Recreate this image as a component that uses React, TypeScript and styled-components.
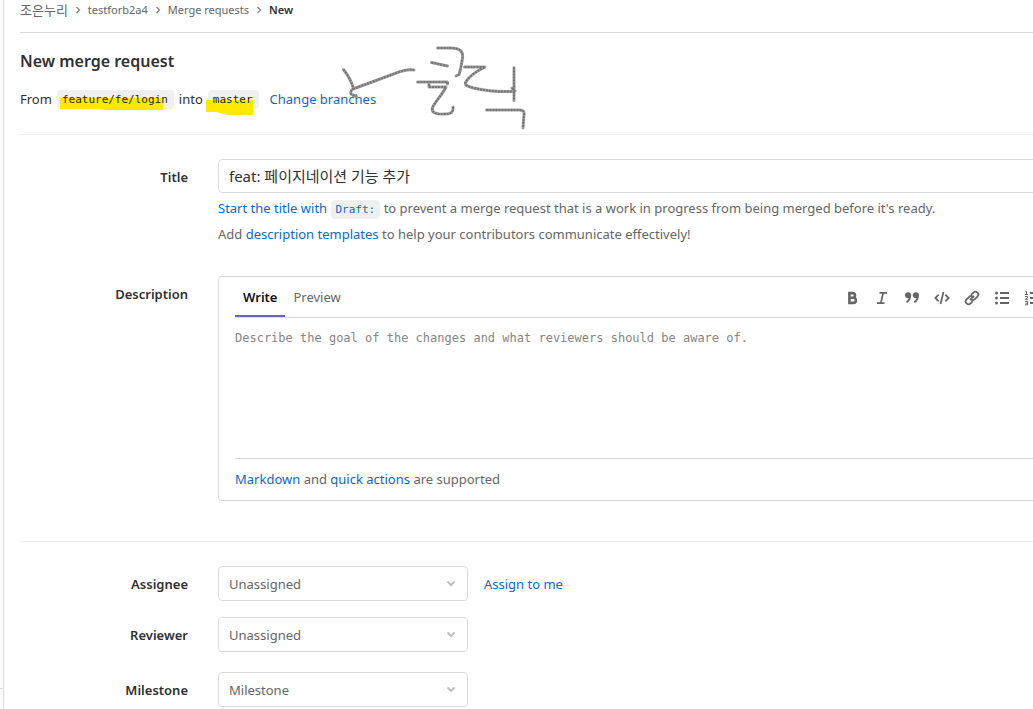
import React from "react";
import styled, { createGlobalStyle, css } from "styled-components";

const sans = `"Noto Sans", "Open Sans", "Noto Sans CJK KR", sans-serif`;
const mono = `"DejaVu Sans Mono", "Liberation Mono", monospace`;

const GlobalStyle = createGlobalStyle`
  *, *::before, *::after { box-sizing: border-box; }
  body {
    margin: 0;
    background: #fff;
    color: #303030;
    font: 13px/20px ${sans};
  }
  input, select, textarea, button { font: inherit; color: inherit; }
`;

const Shell = styled.div`
  display: flex;
  min-height: 100vh;
  overflow: hidden;
`;

const SidebarEdge = styled.aside`
  display: flex;
  flex: none;
  flex-direction: column;
  justify-content: flex-end;
  width: 4px;
  background: #fafafa;
  border-right: 1px solid #dbdbdb;
`;

const SidebarToggle = styled.div`
  height: 21px;
  border-top: 1px solid #dbdbdb;
`;

const Main = styled.main`
  flex: 1;
  min-width: 0;
  padding-left: 16px;
`;

const Breadcrumbs = styled.nav`
  padding-bottom: 12px;
  border-bottom: 1px solid #dbdbdb;

  ol {
    display: flex;
    align-items: center;
    margin: 0;
    padding: 0;
    list-style: none;
  }
  li {
    display: flex;
    align-items: center;
  }
`;

const Crumb = styled.a<{ $group?: boolean; $current?: boolean }>`
  color: ${(p) => (p.$current ? "#303030" : "#666")};
  font-size: ${(p) => (p.$group ? 13 : 11)}px;
  font-weight: ${(p) => (p.$current ? 600 : 400)};
  text-decoration: none;
`;

const CrumbArrow = styled.svg`
  width: 8px;
  height: 8px;
  margin: 0 6px;
  fill: none;
  stroke: #8a8a8a;
  stroke-width: 1.4;
`;

const Intro = styled.header`
  position: relative;
  padding: 16px 0 24px;
  border-bottom: 1px solid #eee;
`;

const PageTitle = styled.h1`
  margin: 0 0 16px;
  font-size: 16px;
  line-height: 24px;
  font-weight: 600;
`;

const BranchLine = styled.p`
  display: flex;
  align-items: center;
  gap: 5px;
  margin: 0;
  line-height: 21px;
`;

const Code = styled.code`
  display: inline-block;
  padding: 2px 5px;
  border-radius: 4px;
  background: #f0f0f0;
  font: 11px/15px ${mono};
`;

const BranchName = styled(Code)`
  position: relative;
  z-index: 0;
  padding: 2px 6px 2px 5px;
  color: #1f1f1f;
`;

const Link = styled.a`
  color: #1068bf;
  text-decoration: none;
`;

const ChangeLink = styled(Link)`
  margin-left: 6px;
`;

/* Highlighter stroke, painted over the chip but under its text. */
const Marker = styled.svg`
  position: absolute;
  z-index: -1;
  top: 8px;
  left: 0;
  overflow: visible;
  fill: #ffe900;
  pointer-events: none;
`;

const PencilNote = styled.svg`
  position: absolute;
  top: 7px;
  left: 310px;
  width: 220px;
  height: 100px;
  fill: none;
  stroke-linejoin: round;
  pointer-events: none;
`;

const Section = styled.section<{ $last?: boolean }>`
  display: flex;
  flex-direction: column;
  padding-top: 24px;
  ${(p) =>
    !p.$last &&
    css`
      padding-bottom: 40px;
      border-bottom: 1px solid #eee;
    `}
`;

const FormRow = styled.div<{ $gap?: number }>`
  display: grid;
  grid-template-columns: 168px minmax(0, 1fr);
  column-gap: 30px;
  margin-bottom: ${(p) => p.$gap ?? 0}px;
`;

const Label = styled.label`
  padding-top: 8px;
  font-weight: 600;
  text-align: right;
`;

/* Wide controls run on under the right-hand edge of the window. */
const WideField = styled.div`
  margin-right: -24px;
`;

const TextInput = styled.input`
  display: block;
  width: 100%;
  height: 34px;
  margin-bottom: 5px;
  padding: 0 10px 2px;
  border: 1px solid #dbdbdb;
  border-radius: 4px;
  background: #fff;
  font-size: 15px;
`;

const Help = styled.p`
  height: 20px;
  margin: 0 0 6px;
  color: #666;
`;

const Editor = styled.div`
  padding: 0 16px;
  border: 1px solid #dbdbdb;
  border-radius: 4px;
`;

const EditorHeader = styled.div`
  display: flex;
  justify-content: space-between;
  height: 41px;
  border-bottom: 1px solid #dbdbdb;
`;

const Tabs = styled.div`
  display: flex;
`;

const Tab = styled.button<{ $active?: boolean }>`
  height: 40px;
  padding: 2px 8px 0;
  border: 0;
  border-bottom: 2px solid ${(p) => (p.$active ? "#6666c4" : "transparent")};
  background: none;
  color: ${(p) => (p.$active ? "#111" : "#666")};
  font-weight: ${(p) => (p.$active ? 600 : 400)};
`;

const Toolbar = styled.div`
  display: flex;
  align-items: center;
  gap: 14px;
  padding-top: 2px;
`;

const ToolButton = styled.button`
  width: 16px;
  height: 16px;
  padding: 0;
  border: 0;
  background: none;

  svg {
    display: block;
    width: 16px;
    height: 16px;
    fill: none;
    stroke: #666;
    stroke-width: 2;
  }
`;

const TextArea = styled.textarea`
  display: block;
  width: 100%;
  height: 140px;
  padding: 10px 0 0;
  border: 0;
  outline: 0;
  resize: none;
  background: transparent;
  font: 12px/20px ${mono};

  &::placeholder {
    color: #868686;
    opacity: 1;
  }
`;

const EditorFooter = styled.div`
  padding: 10px 0 11px;
  border-top: 1px solid #dbdbdb;
  color: #666;
`;

const SelectLine = styled.div`
  display: flex;
  align-items: center;
  gap: 16px;
`;

const SelectBox = styled.div`
  position: relative;
  width: 250px;

  svg {
    position: absolute;
    right: 12px;
    top: 14px;
    width: 10px;
    height: 7px;
    fill: none;
    stroke: #bfbfbf;
    stroke-width: 2;
    pointer-events: none;
  }
`;

const Select = styled.select`
  display: block;
  appearance: none;
  width: 100%;
  height: 35px;
  padding: 0 32px 0 10px;
  border: 1px solid #dbdbdb;
  border-radius: 4px;
  background: #fff;
  color: #666;
`;

const icons: { name: string; art: React.ReactNode }[] = [
  {
    name: "Bold",
    art: <path d="M5.4 3.1h3.3a2.3 2.3 0 0 1 0 4.6H5.4zM5.4 7.7h3.9a2.6 2.6 0 0 1 0 5.2H5.4z" strokeWidth="2.6" />,
  },
  {
    name: "Italic",
    art: <path d="M5.5 2.9H13M3 13.1h7.5M9.2 2.9 6.8 13.1" strokeWidth="1.8" />,
  },
  {
    name: "Quote",
    art: (
      <path
        d="M4 2.2a3 3 0 1 0 .7 5.9C4.3 9.6 3.3 10.7 2 11.7l1 1.3C5.5 11.5 7.2 8.8 7.2 5.5A3.2 3.2 0 0 0 4 2.2zM11.8 2.2a3 3 0 1 0 .7 5.9c-.4 1.5-1.4 2.6-2.7 3.6l1 1.3C13.3 11.5 15 8.8 15 5.5a3.2 3.2 0 0 0-3.2-3.3z"
        fill="#666"
        stroke="none"
      />
    ),
  },
  {
    name: "Code",
    art: <path d="M4.6 4.7 1.4 8l3.2 3.3M11.4 4.7 14.6 8l-3.2 3.3M9.5 2 6.5 14" strokeWidth="1.8" />,
  },
  {
    name: "Link",
    art: (
      <path
        d="M6 10l4-4M7.2 4.8l2.2-2.2a2.75 2.75 0 0 1 4 4l-2.6 2.6a2.75 2.75 0 0 1-3.6.2M8.8 11.2l-2.2 2.2a2.75 2.75 0 0 1-4-4l2.6-2.6a2.75 2.75 0 0 1 3.6-.2"
        strokeWidth="1.8"
      />
    ),
  },
  {
    name: "Bulleted list",
    art: (
      <>
        <path d="M6 3h9M6 8h9M6 13h9" />
        <path d="M2.5 3h.01M2.5 8h.01M2.5 13h.01" strokeWidth="3" strokeLinecap="round" />
      </>
    ),
  },
  {
    name: "Numbered list",
    art: (
      <>
        <path d="M6 3h9M6 8h9M6 13h9" />
        <path
          d="M1.2 1.3h1.3v3M1 4.5h3M1 6.5h2.5v1.3L1.3 9.4H4M1 11.5h2.6v3.4H1M1.5 13.2h2"
          strokeWidth="1"
        />
      </>
    ),
  },
];

const pencilStrokes =
  "M343.5 69.5c4 5 8 12 10 19c-3 2-4 5-1 6.5l4 1.5M353 89l46-17c6-2 10-3 15-2" +
  "M437.5 48h13c9 0 13 3 12 10c-1 7-2 12-3.5 16.5l-3 1.5M431.5 62.5l16 3.5M417.5 82h30v2M429 84v3h17c-4 8-11 15-13.5 20.5c-2 6 6 7 12 6.5c7 0 9-2 8.5-7" +
  "M464.5 67h20.5c-8 4-16 9-19.5 15.5c-1 3 3 4 8 5.5c13 3 26 4 39 3.5M514 67.5v33M512 88l3 3M486.5 110h33c4 0 5 2 4.5 5l-1 13";

const crumbs = ["조은누리", "testforb2a4", "Merge requests", "New"];

const pickers = [
  { id: "assignee", label: "Assignee", value: "Unassigned", action: "Assign to me", gap: 16 },
  { id: "reviewer", label: "Reviewer", value: "Unassigned", gap: 20 },
  { id: "milestone", label: "Milestone", value: "Milestone", gap: 0 },
];

export default function App() {
  return (
    <>
      <GlobalStyle />
      <Shell>
        <SidebarEdge>
          <SidebarToggle />
        </SidebarEdge>
        <Main>
          <Breadcrumbs aria-label="Breadcrumbs">
            <ol>
              {crumbs.map((name, i) => (
                <li key={name}>
                  {i > 0 && (
                    <CrumbArrow viewBox="0 0 8 8" aria-hidden="true">
                      <path d="M2.5 1 5.5 4l-3 3" />
                    </CrumbArrow>
                  )}
                  <Crumb href="#" $group={i === 0} $current={i === crumbs.length - 1}>
                    {name}
                  </Crumb>
                </li>
              ))}
            </ol>
          </Breadcrumbs>

          <Intro>
            <PageTitle>New merge request</PageTitle>
            <BranchLine>
              <span>From</span>
              <BranchName>
                feature/fe/login
                <Marker width="119" height="20" aria-hidden="true">
                  <path d="M3 0H106V12H50L38 11H3z" />
                </Marker>
              </BranchName>
              <span>into</span>
              <BranchName>
                master
                <Marker width="50" height="20" aria-hidden="true">
                  <path d="M-2 2H45V17H20L8 14H-2z" />
                </Marker>
              </BranchName>
              <ChangeLink href="#">Change branches</ChangeLink>
            </BranchLine>
            <PencilNote viewBox="330 40 220 100" aria-hidden="true">
              <path d={pencilStrokes} stroke="#a0a0a0" strokeWidth="3" strokeLinecap="round" />
              <path d={pencilStrokes} stroke="#747474" strokeWidth="2" strokeDasharray="2 1" />
            </PencilNote>
          </Intro>

          <form onSubmit={(e) => e.preventDefault()}>
            <Section>
              <FormRow $gap={26}>
                <Label htmlFor="title">Title</Label>
                <WideField>
                  <TextInput id="title" defaultValue="feat: 페이지네이션 기능 추가" />
                  <Help>
                    <Link href="#">
                      Start the title with <Code>Draft:</Code>
                    </Link>{" "}
                    to prevent a merge request that is a work in progress from being merged before it's ready.
                  </Help>
                  <Help>
                    Add <Link href="#">description templates</Link> to help your contributors communicate effectively!
                  </Help>
                </WideField>
              </FormRow>
              <FormRow>
                <Label htmlFor="description">Description</Label>
                <WideField>
                  <Editor>
                    <EditorHeader>
                      <Tabs>
                        <Tab type="button" $active>
                          Write
                        </Tab>
                        <Tab type="button">Preview</Tab>
                      </Tabs>
                      <Toolbar>
                        {icons.map((icon) => (
                          <ToolButton key={icon.name} type="button" aria-label={icon.name}>
                            <svg viewBox="0 0 16 16">{icon.art}</svg>
                          </ToolButton>
                        ))}
                      </Toolbar>
                    </EditorHeader>
                    <TextArea
                      id="description"
                      placeholder="Describe the goal of the changes and what reviewers should be aware of."
                    />
                    <EditorFooter>
                      <Link href="#">Markdown</Link> and <Link href="#">quick actions</Link> are supported
                    </EditorFooter>
                  </Editor>
                </WideField>
              </FormRow>
            </Section>

            <Section $last>
              {pickers.map((p) => (
                <FormRow key={p.id} $gap={p.gap}>
                  <Label htmlFor={p.id}>{p.label}</Label>
                  <SelectLine>
                    <SelectBox>
                      <Select id={p.id}>
                        <option>{p.value}</option>
                      </Select>
                      <svg viewBox="0 0 10 7" aria-hidden="true">
                        <path d="M1.5 1.5 5 5l3.5-3.5" />
                      </svg>
                    </SelectBox>
                    {p.action && <Link href="#">{p.action}</Link>}
                  </SelectLine>
                </FormRow>
              ))}
            </Section>
          </form>
        </Main>
      </Shell>
    </>
  );
}
